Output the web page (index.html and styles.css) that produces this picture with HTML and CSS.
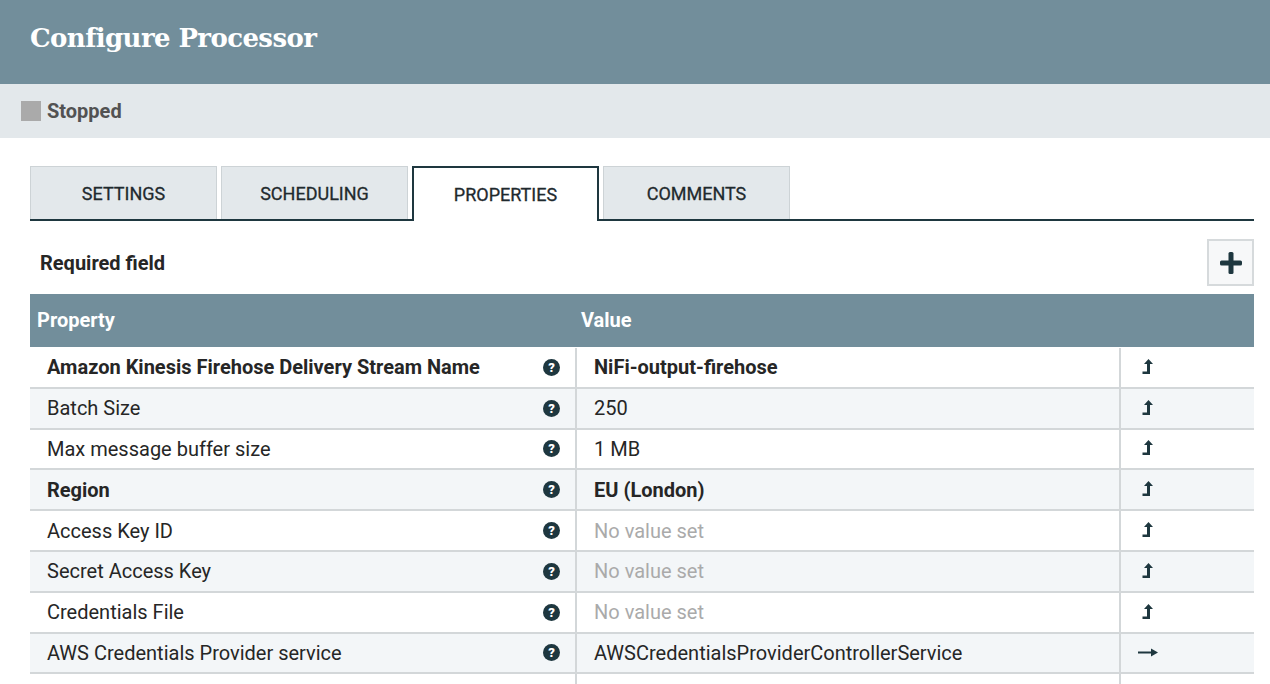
FILE: index.html
```html
<!DOCTYPE html>
<html>
<head>
<meta charset="utf-8">
<link rel="stylesheet" href="styles.css">
</head>
<body>
<header class="dialog-header"><h1 class="dialog-title">Configure Processor</h1></header>
<div class="status-bar"><span class="status-square"></span><span class="status-text">Stopped</span></div>
<main class="content">
  <nav class="tabs">
    <div class="tab">SETTINGS</div>
    <div class="tab">SCHEDULING</div>
    <div class="tab tab-active">PROPERTIES</div>
    <div class="tab">COMMENTS</div>
  </nav>
  <div class="toolbar">
    <span class="required">Required field</span>
    <button class="add-btn" aria-label="Add property">
      <svg width="24" height="24" viewBox="0 0 24 24"><rect x="9.5" y="1" width="5" height="22" rx="1.5" fill="#1e373f"/><rect x="1" y="9.5" width="22" height="5" rx="1.5" fill="#1e373f"/></svg>
    </button>
  </div>
  <div class="table">
    <div class="thead">
      <div class="th th-prop">Property</div>
      <div class="th th-val">Value</div>
      <div class="th th-act"></div>
    </div>
    <div class="row"><div class="c-prop bold">Amazon Kinesis Firehose Delivery Stream Name<span class="help">?</span></div><div class="c-val bold">NiFi-output-firehose</div><div class="c-act"><svg class="lvl" width="11" height="15" viewBox="0 0 11 15"><path d="M6.5 0 L11 5 L8 5 L8 15 L0.5 15 L0.5 12.5 L5 12.5 L5 5 L2 5 Z" fill="#1e373f"/></svg></div></div>
    <div class="row alt"><div class="c-prop">Batch Size<span class="help">?</span></div><div class="c-val">250</div><div class="c-act"><svg class="lvl" width="11" height="15" viewBox="0 0 11 15"><path d="M6.5 0 L11 5 L8 5 L8 15 L0.5 15 L0.5 12.5 L5 12.5 L5 5 L2 5 Z" fill="#1e373f"/></svg></div></div>
    <div class="row"><div class="c-prop">Max message buffer size<span class="help">?</span></div><div class="c-val">1 MB</div><div class="c-act"><svg class="lvl" width="11" height="15" viewBox="0 0 11 15"><path d="M6.5 0 L11 5 L8 5 L8 15 L0.5 15 L0.5 12.5 L5 12.5 L5 5 L2 5 Z" fill="#1e373f"/></svg></div></div>
    <div class="row alt"><div class="c-prop bold">Region<span class="help">?</span></div><div class="c-val bold">EU (London)</div><div class="c-act"><svg class="lvl" width="11" height="15" viewBox="0 0 11 15"><path d="M6.5 0 L11 5 L8 5 L8 15 L0.5 15 L0.5 12.5 L5 12.5 L5 5 L2 5 Z" fill="#1e373f"/></svg></div></div>
    <div class="row"><div class="c-prop">Access Key ID<span class="help">?</span></div><div class="c-val unset">No value set</div><div class="c-act"><svg class="lvl" width="11" height="15" viewBox="0 0 11 15"><path d="M6.5 0 L11 5 L8 5 L8 15 L0.5 15 L0.5 12.5 L5 12.5 L5 5 L2 5 Z" fill="#1e373f"/></svg></div></div>
    <div class="row alt"><div class="c-prop">Secret Access Key<span class="help">?</span></div><div class="c-val unset">No value set</div><div class="c-act"><svg class="lvl" width="11" height="15" viewBox="0 0 11 15"><path d="M6.5 0 L11 5 L8 5 L8 15 L0.5 15 L0.5 12.5 L5 12.5 L5 5 L2 5 Z" fill="#1e373f"/></svg></div></div>
    <div class="row"><div class="c-prop">Credentials File<span class="help">?</span></div><div class="c-val unset">No value set</div><div class="c-act"><svg class="lvl" width="11" height="15" viewBox="0 0 11 15"><path d="M6.5 0 L11 5 L8 5 L8 15 L0.5 15 L0.5 12.5 L5 12.5 L5 5 L2 5 Z" fill="#1e373f"/></svg></div></div>
    <div class="row alt"><div class="c-prop">AWS Credentials Provider service<span class="help">?</span></div><div class="c-val">AWSCredentialsProviderControllerService</div><div class="c-act"><svg class="arr" width="20" height="9" viewBox="0 0 20 9"><path d="M0 3.6 H13 V0.5 L20 4.5 L13 8.5 V5.4 H0 Z" fill="#1e373f"/></svg></div></div>
    <div class="row"><div class="c-prop"></div><div class="c-val"></div><div class="c-act"></div></div>
  </div>
</main>
</body>
</html>
```
FILE: styles.css
```css
html, body {
  margin: 0;
  padding: 0;
  background: #fff;
  font-family: Roboto, "Liberation Sans", sans-serif;
  color: #262626;
  overflow: hidden;
}
.dialog-header {
  height: 84px;
  background: #728e9b;
  display: flex;
  align-items: center;
  padding-left: 30px;
  box-sizing: border-box;
}
.dialog-title {
  margin: 0;
  font-family: "DejaVu Serif", serif;
  font-weight: bold;
  font-size: 26px;
  color: #fff;
  letter-spacing: -0.6px;
  padding-bottom: 8px;
}
.status-bar {
  height: 54px;
  background: #e3e8eb;
  display: flex;
  align-items: center;
  padding-left: 21px;
  box-sizing: border-box;
}
.status-square {
  width: 20px;
  height: 20px;
  background: #aaaaaa;
  margin-right: 6px;
}
.status-text {
  font-size: 20px;
  font-weight: bold;
  color: #525252;
}
.content {
  padding: 28px 16px 0 30px;
}
.tabs {
  display: flex;
  gap: 4px;
  height: 53px;
  border-bottom: 2px solid #1e373f;
}
.tab {
  width: 187px;
  box-sizing: border-box;
  height: 53px;
  background: #e3e8eb;
  border: 1px solid #cdd3d6;
  border-bottom: none;
  display: flex;
  align-items: center;
  justify-content: center;
  font-size: 18px;
  font-weight: 400;
  color: #1f2a2e;
  -webkit-text-stroke: 0.3px #1f2a2e;
}
.tab-active {
  background: #fff;
  border: 2px solid #1e373f;
  border-bottom: none;
  height: 55px;
  margin-bottom: -2px;
}
.toolbar {
  height: 73px;
  display: flex;
  align-items: center;
  justify-content: space-between;
  padding-left: 10px;
}
.required {
  font-size: 20px;
  font-weight: bold;
  color: #262626;
  margin-top: 10px;
}
.add-btn {
  width: 47px;
  height: 47px;
  border: 2px solid #d6dadc;
  background: #f7f8f9;
  display: flex;
  align-items: center;
  justify-content: center;
  padding: 0;
  box-sizing: border-box;
  margin-top: 10px;
}
.table {
  display: flex;
  flex-direction: column;
}
.thead {
  display: grid;
  grid-template-columns: 545px 544px 1fr;
  height: 53px;
  background: #728e9b;
  color: #fff;
  font-size: 20px;
  font-weight: bold;
  border-bottom: 1px solid #fff;
}
.th {
  display: flex;
  align-items: center;
  padding-left: 7px;
  padding-bottom: 2px;
}
.th-val { padding-left: 6px; }
.row {
  display: grid;
  grid-template-columns: 545px 544px 1fr;
  height: 40.8px;
  box-sizing: border-box;
  border-bottom: 2px solid #d3d7d9;
  background: #fff;
  font-size: 20px;
}
.row.alt { background: #f3f6f8; }
.row > div {
  display: flex;
  align-items: center;
  box-sizing: border-box;
  white-space: nowrap;
}
.c-prop {
  padding-left: 17px;
  padding-right: 15px;
  justify-content: space-between;
}
.c-val {
  padding-left: 17px;
  border-left: 2px solid #d3d7d9;
}
.c-act {
  padding-left: 21px;
  border-left: 2px solid #d3d7d9;
}
.bold { font-weight: bold; }
.unset { color: #aaaaaa; }
.help {
  width: 17px;
  height: 17px;
  border-radius: 50%;
  background: #1e373f;
  color: #fff;
  font-size: 13px;
  font-weight: 900;
  display: flex;
  align-items: center;
  justify-content: center;
  line-height: 1;
  flex-shrink: 0;
}
.lvl { margin-top: -2px; }
.arr { margin-left: -4px; }
```
